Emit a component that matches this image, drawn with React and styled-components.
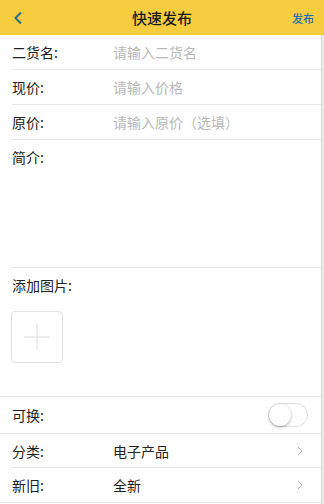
import styled, { createGlobalStyle } from 'styled-components';

const Global = createGlobalStyle`
  html, body {
    margin: 0;
    padding: 0;
    background: #ececec;
  }
  body {
    font-family: 'Noto Sans CJK SC', 'Noto Sans', sans-serif;
    color: #222;
  }
`;

const Page = styled.div`
  width: 324px;
  height: 504px;
  display: flex;
  flex-direction: column;
  overflow: hidden;
`;

const Header = styled.header`
  height: 35px;
  flex-shrink: 0;
  background: #f5cd3e;
  display: grid;
  grid-template-columns: 60px 1fr 60px;
  align-items: center;
`;

const Back = styled.div`
  padding-left: 13px;
  display: flex;
  align-items: center;
`;

const Title = styled.h1`
  margin: 0;
  text-align: center;
  font-size: 15px;
  font-weight: 500;
  color: #1a1a1a;
`;

const Publish = styled.span`
  justify-self: end;
  padding-right: 10px;
  font-size: 11px;
  font-weight: 500;
  color: #1f6fae;
`;

const Body = styled.main`
  flex: 1;
  background: #fff;
  margin-right: 2px;
  border-right: 1px solid #d4d4d4;
  display: flex;
  flex-direction: column;
`;

const Row = styled.div`
  height: ${({ h }) => h || 34}px;
  display: flex;
  align-items: center;
  border-bottom: 1px solid #e6e6e6;
  margin-left: ${({ inset }) => (inset ? '12px' : '0')};
  padding-left: ${({ inset }) => (inset ? '0' : '12px')};
  box-sizing: content-box;
`;

const Label = styled.span`
  width: 101px;
  flex-shrink: 0;
  font-size: 14px;
  color: #222;
`;

const Placeholder = styled.span`
  font-size: 14px;
  color: #b8b8b8;
`;

const Value = styled.span`
  flex: 1;
  font-size: 14px;
  color: #222;
`;

const Block = styled.div`
  height: ${({ h }) => h}px;
  margin-left: ${({ inset }) => (inset ? '12px' : '0')};
  padding: 7px 0 0 ${({ inset }) => (inset ? '0' : '12px')};
  border-bottom: 1px solid #e6e6e6;
  box-sizing: border-box;
  display: flex;
  flex-direction: column;
`;

const AddBox = styled.div`
  margin-top: 16px;
  margin-left: -1px;
  width: 50px;
  height: 50px;
  border: 1px solid #e2e2e2;
  border-radius: 4px;
  display: flex;
  align-items: center;
  justify-content: center;
`;

const Toggle = styled.div`
  margin-left: auto;
  margin-right: 13px;
  width: 40px;
  height: 24px;
  border-radius: 12px;
  border: 1px solid #dedede;
  background: #fff;
  position: relative;
  box-sizing: border-box;
`;

const Knob = styled.div`
  position: absolute;
  left: 0;
  top: 0;
  width: 22px;
  height: 22px;
  border-radius: 50%;
  background: #fff;
  box-shadow: 0 1px 3px rgba(0, 0, 0, 0.35);
`;

const Chevron = styled.div`
  margin-right: 18px;
  display: flex;
`;

const ChevronIcon = () => (
  <svg width="6" height="10" viewBox="0 0 6 10">
    <path d="M1 1l4 4-4 4" fill="none" stroke="#b5b5b5" strokeWidth="1" />
  </svg>
);

export default function App() {
  return (
    <Page>
      <Global />
      <Header>
        <Back>
          <svg width="10" height="14" viewBox="0 0 10 14">
            <path d="M8 1.5L2.5 7 8 12.5" fill="none" stroke="#2f6a82" strokeWidth="2" />
          </svg>
        </Back>
        <Title>快速发布</Title>
        <Publish>发布</Publish>
      </Header>
      <Body>
        <Row inset>
          <Label>二货名:</Label>
          <Placeholder>请输入二货名</Placeholder>
        </Row>
        <Row inset>
          <Label>现价:</Label>
          <Placeholder>请输入价格</Placeholder>
        </Row>
        <Row inset>
          <Label>原价:</Label>
          <Placeholder>请输入原价（选填）</Placeholder>
        </Row>
        <Block h={128} inset>
          <Label>简介:</Label>
        </Block>
        <Block h={129}>
          <Label>添加图片:</Label>
          <AddBox>
            <svg width="28" height="28" viewBox="0 0 28 28">
              <path d="M14 1v26M1 14h26" stroke="#dadada" strokeWidth="1" />
            </svg>
          </AddBox>
        </Block>
        <Row h={36}>
          <Label>可换:</Label>
          <Toggle>
            <Knob />
          </Toggle>
        </Row>
        <Row h={33} inset>
          <Label>分类:</Label>
          <Value>电子产品</Value>
          <Chevron>
            <ChevronIcon />
          </Chevron>
        </Row>
        <Row h={34}>
          <Label>新旧:</Label>
          <Value>全新</Value>
          <Chevron>
            <ChevronIcon />
          </Chevron>
        </Row>
      </Body>
    </Page>
  );
}
